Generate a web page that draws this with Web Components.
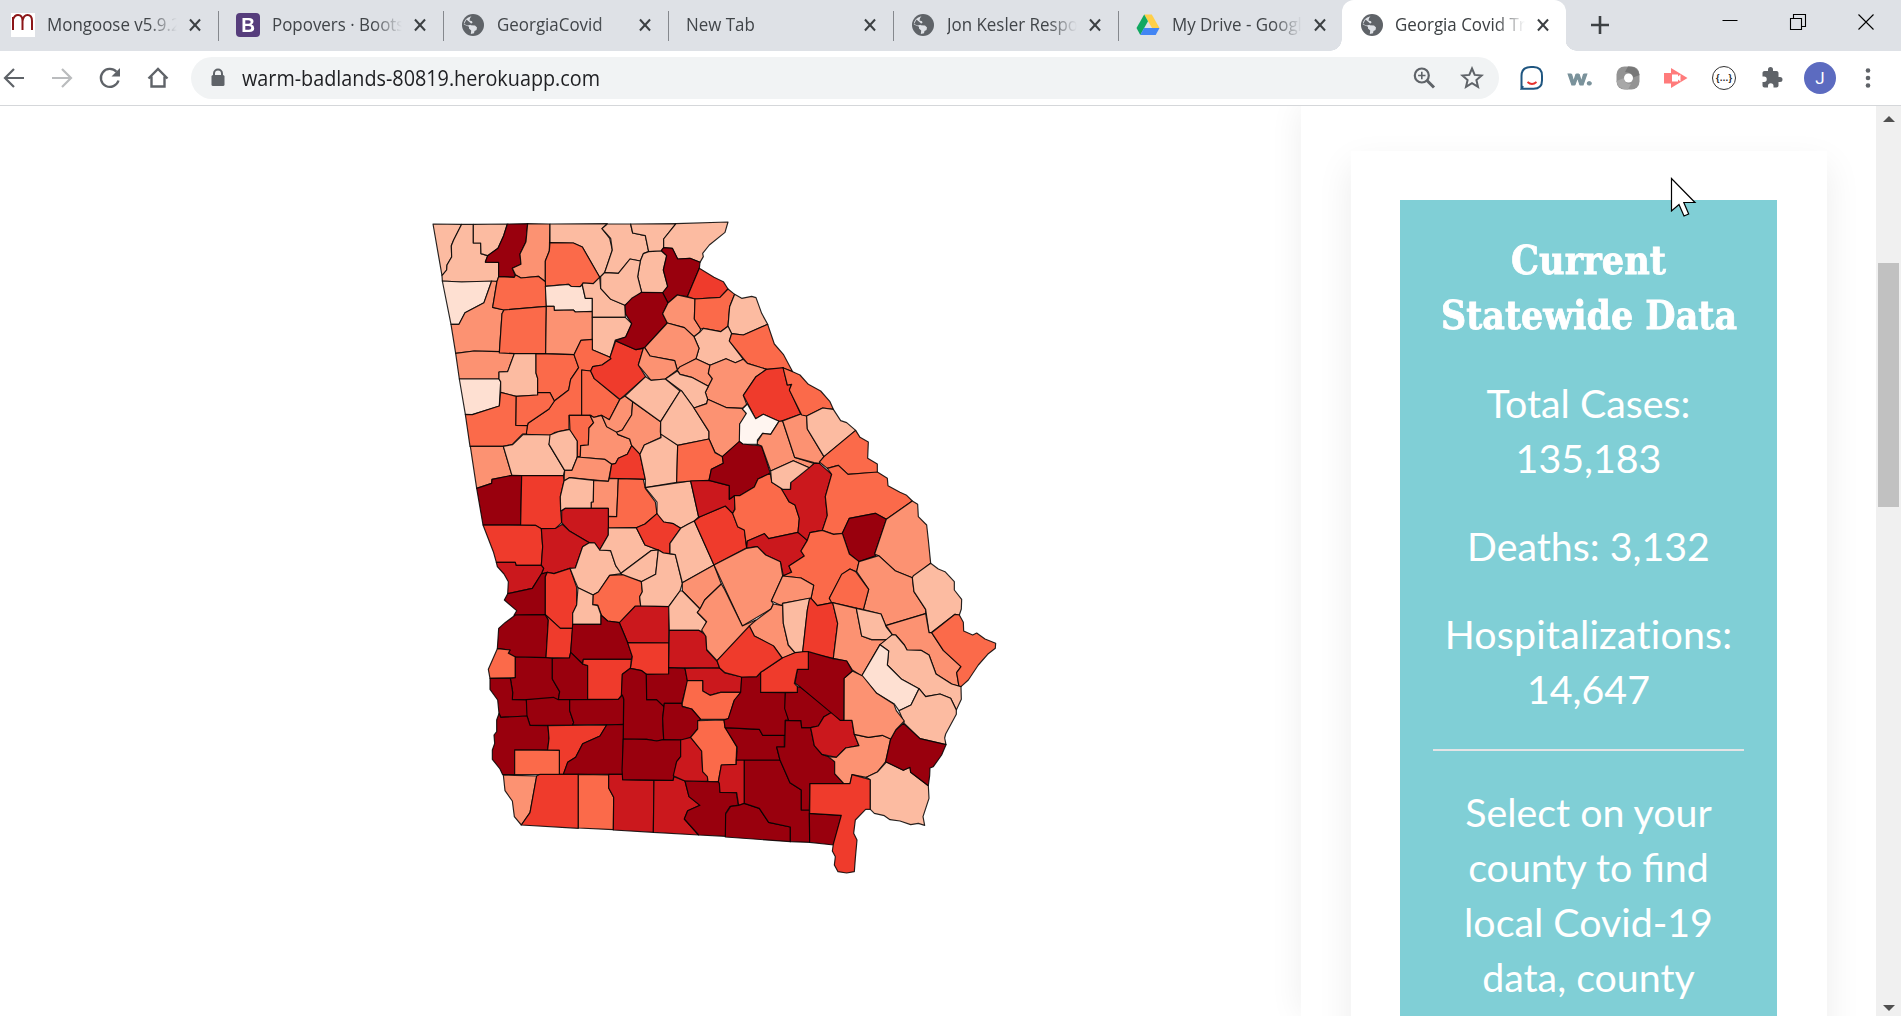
<!DOCTYPE html>
<html lang="en">
<head>
<meta charset="utf-8">
<title>Georgia Covid Tracker</title>
<style>
html,body{margin:0;height:100%;overflow:hidden;background:#fff}
</style>
</head>
<body>
<browser-window></browser-window>
<script>
const define=(name,html,after)=>customElements.define(name,class extends HTMLElement{
  connectedCallback(){
    if(this.shadowRoot)return;
    const t=document.createElement('template');
    t.innerHTML=typeof html==='function'?html(this):html;
    this.attachShadow({mode:'open'}).append(t.content.cloneNode(true));
    if(after)after(this);
  }
});

/* Text squeezed horizontally to a given width */
define('fit-text',`<style>:host{display:block}span{display:inline-block;white-space:pre;transform-origin:0 50%}</style><span><slot></slot></span>`,el=>{
  const s=el.shadowRoot.querySelector('span'),w=+el.getAttribute('w'),k=+el.getAttribute('k');
  const r=k||w/s.getBoundingClientRect().width;
  s.style.transform=`scaleX(${r})`;
  if(w)el.style.width=w+'px';
});

const ICONS={
  mongoose:`<rect x="0" y="0" width="24" height="24" fill="#fff"/><path d="M2 17V4M2 6.500Q3.500 2 7 2Q11.500 2 11.500 8V17M11.500 8Q12.500 2 16.500 2Q21 2 21 8V17" fill="none" stroke="#8c1618" stroke-width="2"/>`,
  boot:`<rect width="24" height="24" rx="4" fill="#563d7c"/><path fill="#fff" fill-rule="evenodd" d="M6.500 5H13Q17.500 5 17.500 8.600Q17.500 10.800 15.500 11.600Q18.200 12.400 18.200 15.200Q18.200 19 13.300 19H6.500ZM9.300 7.200V10.700H12.500Q14.700 10.700 14.700 8.900Q14.700 7.200 12.500 7.200ZM9.300 12.900V16.800H12.800Q15.300 16.800 15.300 14.800Q15.300 12.900 12.800 12.900Z"/>`,
  globe:`<circle cx="12" cy="12" r="11" fill="#5f6368"/><path fill="#dee1e6" d="M10.500 3.200Q8 5.500 8.500 7.500L11 8.200L11.500 9.800L9.500 11L9.800 12.300L14 12.500L16 14.500L15.500 17L13.500 18L13 20.300L9.800 21L10.200 17.500L8 15.500L8 13.800L2.800 11.500Q3 5 10.500 3.200Z"/><path fill="#5f6368" d="M5.500 6.500L9 9.500L11 11.500L6.500 12.500L3 11Z"/>`,
  drive:`<path fill="#ffcf48" d="M8.200 1.500H15.800L23.500 15H16Z"/><path fill="#11a861" d="M8.200 1.500L12 8.200L4.300 22L.5 15Z"/><path fill="#4285f4" d="M8 15H23.500L19.700 22H4.300Z"/>`,
  close:`<path d="M6.500 6L17.500 18M17.500 6L6.500 18" stroke="#3c4043" stroke-width="2.200"/>`,
  plus:`<path d="M12 3V21M3 12H21" stroke="#3c4043" stroke-width="2.600"/>`,
  back:`<path d="M22 12H3.500M12 3L3 12L12 21" fill="none" stroke="#5f6368" stroke-width="2.200"/>`,
  fwd:`<path d="M2 12H20.500M12 3L21 12L12 21" fill="none" stroke="#babcbe" stroke-width="2.200"/>`,
  reload:`<path d="M20.500 14.500A9 9 0 1 1 18.500 5.800" fill="none" stroke="#5f6368" stroke-width="2.300"/><path d="M22 2V10.500H13.500Z" fill="#5f6368"/>`,
  home:`<path d="M2.500 12.500L12 3L21.500 12.500M5.500 10.500V20.500H18.500V10.500" fill="none" stroke="#5f6368" stroke-width="2.400"/>`,
  lock:`<rect x="5.500" y="9" width="13" height="11" rx="1.500" fill="#5f6368"/><path d="M8 9.500V7.500A4 4 0 0 1 16 7.500V9.500" fill="none" stroke="#5f6368" stroke-width="2"/>`,
  zoom:`<circle cx="9.800" cy="9.500" r="7" fill="none" stroke="#5f6368" stroke-width="2.200"/><path d="M15 14.500L22 21.500" stroke="#5f6368" stroke-width="3"/><path d="M9.800 5.800V13.200M6.100 9.500H13.500" stroke="#5f6368" stroke-width="1.600"/>`,
  star:`<path d="M12 2.500L14.700 8.900L21.600 9.500L16.400 14L18 20.800L12 17.200L6 20.800L7.600 14L2.400 9.500L9.300 8.900Z" fill="none" stroke="#5f6368" stroke-width="2"/>`,
  smile:`<path d="M1.500 22.800V10Q1.500 1 11 1H13.500Q22 1 22 10V14.500Q22 22.800 13.500 22.800H1.500L3 20" fill="#fff" stroke="#1f5680" stroke-width="2"/><path d="M7.500 16Q12 20 16.500 16" fill="none" stroke="#e5322d" stroke-width="1.800"/>`,
  json:`<rect x=".5" y=".5" width="23" height="23" rx="8" fill="#939393"/><path d="M12 .5Q22 0 23.500 9L16 12Q16 6 9 6Z" fill="#777"/><path d="M12 23.500Q2 24 .5 15L8 12Q8 18 15 18Z" fill="#a8a8a8"/><circle cx="12.500" cy="12" r="4.500" fill="#fff"/>`,
  play:`<path fill="#ff7b7b" d="M0 7H7V2L23.500 12L7 22V17.500H0Z"/><path d="M8 8.500H14V10.500L16.500 8.500V15.500L14 13.500V15.500H8Z" fill="#fff"/>`,
  ext:`<path fill="#5f6368" d="M20 11H18.500V7C18.500 5.900 17.600 5 16.500 5H13V3.500A2.500 2.500 0 0 0 8 3.500V5H4.500C3.400 5 2.500 5.900 2.500 7V10.500H4A2.700 2.700 0 0 1 4 16H2.500V19.500C2.500 20.600 3.400 21.500 4.500 21.500H8V20A2.700 2.700 0 0 1 13.500 20V21.500H16.500C17.600 21.500 18.500 20.600 18.500 19.500V16H20A2.500 2.500 0 0 0 20 11Z"/>`,
  dots:`<circle cx="12" cy="4.500" r="2.300" fill="#5f6368"/><circle cx="12" cy="12" r="2.300" fill="#5f6368"/><circle cx="12" cy="19.500" r="2.300" fill="#5f6368"/>`,
  min:`<path d="M4.500 7.500H19.500" stroke="#000" stroke-width="1"/>`,
  max:`<path d="M4.500 5.500H15.500V16.500H4.500ZM7.500 5.500V1.500H19.500V13.500H15.500" fill="none" stroke="#000" stroke-width="1.100"/>`,
  quit:`<path d="M4.500 1.500L19.500 16.500M19.500 1.500L4.500 16.500" stroke="#000" stroke-width="1.100"/>`
};
define('ui-icon',el=>`<style>:host{display:block;width:24px;height:24px;flex:none}svg{display:block;width:100%;height:100%}</style><svg viewBox="0 0 24 24">${ICONS[el.getAttribute('name')]}</svg>`);

define('browser-tab',el=>`<style>
:host{display:flex;align-items:center;width:225px;height:51px;box-sizing:border-box;padding:0 12px 0 17px;flex:none;border-right:1.500px solid transparent;position:relative;font:18px/26px "Open Sans",sans-serif;color:#414549}
:host(:not([active]))::after{content:"";position:absolute;right:-1px;top:11px;height:30px;width:1.500px;background:#85888d}
:host([last])::after{display:none}
:host([active]){background:#fff;border-radius:12px 12px 0 0;margin-left:-2px;padding-left:18px;width:224px;padding-right:11px;color:#3c4043}
:host([active])::before{content:"";position:absolute;left:-12px;right:-12px;bottom:0;height:12px;background:radial-gradient(circle at 0 0,transparent 11.500px,#fff 12px) left/12px 12px no-repeat,radial-gradient(circle at 100% 0,transparent 11.500px,#fff 12px) right/12px 12px no-repeat}
div{flex:1;overflow:hidden;margin:-3px 5px 0 12px;-webkit-mask:linear-gradient(90deg,#000 101px,transparent 130px);mask:linear-gradient(90deg,#000 101px,transparent 130px)}
:host([active]) div{margin-left:11px}
:host([blank]) div{margin-left:0;-webkit-mask:none;mask:none}
ui-icon{margin-top:-1px}
.x{width:22px;height:22px}
</style>${el.hasAttribute('blank')?'':`<ui-icon name="${el.getAttribute('icon')}"></ui-icon>`}<div><fit-text k=".94"><slot></slot></fit-text></div><ui-icon class="x" name="close"></ui-icon>`);

define('tab-strip',`<style>
:host{display:flex;height:51px;background:#dee1e6;align-items:center}
.tabs{display:flex;margin-left:-6px;flex:none}
.plus{margin-left:22px;margin-top:-1px}
.win{margin-left:auto;display:flex;gap:44px;margin-right:23px;height:24px;padding-top:2px;align-self:flex-start;margin-top:11px}
</style><div class="tabs">
<browser-tab icon="mongoose">Mongoose v5.9.27</browser-tab>
<browser-tab icon="boot">Popovers · Bootstrap</browser-tab>
<browser-tab icon="globe">GeorgiaCovid</browser-tab>
<browser-tab blank>New Tab</browser-tab>
<browser-tab icon="globe">Jon Kesler Respo</browser-tab>
<browser-tab icon="drive" last>My Drive - Google</browser-tab>
<browser-tab icon="globe" active>Georgia Covid Tr</browser-tab></div>
<ui-icon class="plus" name="plus"></ui-icon>
<div class="win"><ui-icon name="min"></ui-icon><ui-icon name="max"></ui-icon><ui-icon name="quit"></ui-icon></div>`);

define('tool-bar',`<style>
:host{display:flex;align-items:center;height:54px;background:#fff;border-bottom:1px solid #d5d7da;padding-left:2px;font-family:"Open Sans",sans-serif}
.nav{display:flex;gap:24px;width:189px;flex:none}
.omni{display:flex;align-items:center;width:1308px;height:42px;border-radius:21px;background:#f1f3f4;box-sizing:border-box;padding:0 15px;font-size:21px;line-height:30px;color:#202124;flex:none}
.omni fit-text{margin:0 auto 0 12px}
.star{margin-left:24px}
.exts{display:flex;gap:24px;margin-left:21px;align-items:center}
.w{width:24px;font:900 20px/22px Lato,sans-serif;color:#7a929b;-webkit-text-stroke:1px #7a929b;margin-top:-3px}
.j{width:32px;height:32px;border-radius:50%;background:#5c6bc0;color:#fff;font:17px/32px Roboto,sans-serif;text-align:center;margin:0 -4px}
</style><div class="nav"><ui-icon name="back"></ui-icon><ui-icon name="fwd"></ui-icon><ui-icon name="reload"></ui-icon><ui-icon name="home"></ui-icon></div>
<div class="omni"><ui-icon name="lock"></ui-icon><fit-text w="358">warm-badlands-80819.herokuapp.com</fit-text><ui-icon name="zoom"></ui-icon><ui-icon class="star" name="star"></ui-icon></div>
<div class="exts"><ui-icon name="smile"></ui-icon><div class="w"><fit-text w="24">w.</fit-text></div><ui-icon name="json"></ui-icon><ui-icon name="play"></ui-icon><brace-icon></brace-icon><ui-icon name="ext"></ui-icon><div class="j">J</div><ui-icon name="dots"></ui-icon></div>`);

define('brace-icon',`<style>:host{display:flex;align-items:center;justify-content:center;width:24px;height:24px;box-sizing:border-box;border:1.800px solid #333;border-radius:50%;font:700 9px/12px "Liberation Sans",sans-serif;color:#222;flex:none}</style><span>{…}</span>`);

/* County shapes, in sheets of triple-size units: [dx, dy, "shade x,y x,y ..."] */
const FILL={a:'#fff5f0',b:'#fee0d2',c:'#fcbba1',d:'#fc9272',e:'#fb6a4a',f:'#ef3b2c',g:'#cb181d',h:'#99000d'};
const SHEETS=[
[0,0,`c 24,27 110,28 86,75 79,92 80,126 66,150 65,165 51,182
c 110,28 145,28 145,84 167,84 168,116 188,122 181,140 221,142 221,185 216,199 110,201 52,198 51,182 65,165 66,150 80,126 79,92 86,75
c 145,28 247,27 236,62 219,100 188,122 168,116 167,84 145,84
h 247,27 308,26 303,80 285,117 288,148 262,160 270,180 268,187 221,185 221,142 181,142 188,122 219,100 236,62
d 308,26 375,27 373,108 361,138 361,200 340,184 288,189 272,180 262,160 288,148 285,117 303,80
c 375,27 547,26 531,41 554,70 562,105 539,172 524,187 472,96 445,84 375,83
e 375,83 445,84 472,96 524,187 505,206 474,204 466,215 438,214 430,208 361,214 361,138 373,108
b 52,198 110,201 200,198 177,263 120,293 102,328 78,328
d 200,198 216,199 203,277 237,285 231,296 223,410 147,408 92,415 78,328 102,328 120,293 177,263
e 216,199 221,185 268,187 272,180 288,189 340,184 361,200 364,274 237,285 203,277
e 237,285 364,274 362,416 268,416 223,414 231,296
b 361,214 430,208 438,214 466,215 472,210 481,250 502,250 502,289 451,291 445,285 388,286 387,274 364,274
d 364,274 387,274 388,286 445,285 451,291 502,289 502,373 468,376 447,419 362,416
c 474,204 505,206 524,187 527,220 557,252 600,271 601,307 502,307 502,250 481,250 472,210
c 502,307 601,307 620,326 602,366 571,375 555,427 502,404
d 92,415 147,408 223,410 223,414 268,416 248,470 222,471 222,492 103,492
b 103,492 222,492 227,500 225,532 223,573 142,599 121,598
c 268,416 333,416 333,474 338,490 338,540 273,544 227,532 227,500 222,492 222,471 248,470
e 333,416 447,419 461,458 437,493 431,525 388,558 375,533 338,533 338,490 333,474
e 447,419 468,376 502,373 502,404 555,427 558,431 531,450 503,455 497,468 470,465 470,601 432,601 432,643 388,653 376,661 305,658 304,650 309,625 372,582 388,558 431,525 437,493 461,458
e 273,544 338,540 338,533 375,533 388,558 372,582 309,625 307,632 272,631
e 121,598 142,599 223,573 227,532 273,544 272,631 307,632 304,657 293,657 262,688 234,694 135,694
e 470,465 497,468 508,491 584,554 553,614 527,601 507,608 497,601 470,601
f 555,427 572,378 633,404 655,400 640,450 662,485 585,553 508,491 497,468 503,455 531,450 558,431`],
[75,555,`d 61,139 160,139 186,226 126,238 125,250 80,265
c 160,139 188,134 220,103 300,105 305,105 297,133 344,211 340,227 186,227
c 300,105 325,95 360,88 382,123 382,171 366,211 344,211 297,133
e 358,46 420,46 431,68 417,84 415,135 392,137 391,169 382,171 382,123 360,90
d 420,46 431,52 455,46 470,79 500,92 503,103 539,117 545,137 532,163 505,175 497,190 485,193 464,178 382,171 391,169 392,137 415,135 417,84 431,68
d 455,46 478,59 510,-2 525,-12 548,5 545,45 517,90 500,97 470,80
d 548,5 632,65 631,95 633,112 583,135 570,163 545,137 539,117 503,103 500,97 517,90 545,45
d 382,171 464,178 485,193 475,244 358,233 342,243 344,211 366,211
f 485,193 497,190 505,175 532,163 545,137 570,163 586,238 478,235
h 80,265 125,250 126,238 186,226 215,227 212,375 99,375
f 215,227 340,227 342,243 331,290 332,333 335,368 317,385 274,386 256,376 212,375
c 342,243 358,233 431,241 430,306 424,307 424,325 346,325 332,333 331,290
d 431,241 475,244 478,235 505,236 500,350 475,349 475,325 424,325 424,307 430,306
e 505,236 580,238 586,265 616,306 621,341 585,372 559,383 475,384 475,349 500,350
g 335,333 346,325 475,325 475,405 449,450 434,429 418,428 357,392 335,368
c 570,163 583,135 633,113 633,100 683,135 680,247 586,263 586,238
c 586,263 722,243 746,351 733,363 715,372 692,385 670,371 641,366 621,345 621,306
f 99,375 256,376 274,386 278,440 274,496 198,496 196,487 139,487 130,455
g 274,386 317,385 337,373 357,392 418,428 398,440 376,504 360,505 312,521 292,517 274,522 281,505 274,496 278,440
g 139,487 196,487 198,496 274,496 281,505 274,522 247,565 173,581 175,545 162,522 142,500
h 173,581 247,565 274,522 292,517 286,530 286,644 192,646 200,632 163,600
f 292,517 312,521 360,505 380,562 380,615 368,640 368,685 331,685 286,644 286,530
c 360,505 376,504 398,440 418,428 434,429 449,450 482,452 497,497 518,520 479,526 445,576 429,585 384,563 375,543
c 475,384 559,383 585,435 625,450 603,452 513,520 497,497 482,452 449,450 475,405
f 559,383 585,372 621,341 641,366 670,371 692,385 660,430 660,461 640,459 625,450 585,435
c 603,452 625,450 617,523 574,545 518,528 513,520
e 479,526 518,524 574,545 577,575 569,590 572,618 555,620 510,668 473,663 455,647 443,615 428,614 429,585 445,576
c 384,563 429,585 428,614 443,617 453,645 453,673 368,673 368,640 380,615
c 617,523 625,450 640,459 676,464 697,550 690,573 656,620 572,618 569,590 577,575 574,545
c 660,461 660,430 692,385 715,372 733,363 792,495 697,548 676,464
d 697,548 697,573 750,627 764,600 814,552 792,495`],
[165,1155,`g 466,18 568,20 566,129 443,128 418,68
c 566,20 600,-27 607,-27 660,27 652,38 680,66 665,95 656,91 568,91
h 106,45 196,44 205,60 198,173 106,171 85,160 90,150 52,146 56,85 75,68
f 196,44 241,85 278,85 272,157 268,174 198,173 205,60
h 278,73 363,73 363,45 383,63 418,68 443,128 457,170 454,178 310,178 308,192 272,157
f 443,128 566,129 566,222 499,223 485,212 451,205 457,170
g 568,91 656,91 678,105 680,150 711,183 719,204 566,203
e 52,146 90,150 85,160 106,171 106,233 30,235 25,208
h 106,171 198,173 217,175 217,237 239,275 235,299 97,299 98,277 91,235 106,233
h 217,175 268,174 272,157 308,192 323,197 323,298 235,299 239,275 217,237
f 310,178 454,178 451,205 427,223 425,285 415,298 323,298 323,197 308,192
h 427,223 451,205 485,212 499,223 500,299 530,299 552,320 548,355 551,419 530,423 500,418 430,417 431,295 424,285
h 499,223 566,222 566,203 615,205 623,245 605,310 553,310 552,320 530,299 500,299
g 615,205 719,204 735,219 785,231 783,277 722,277 690,286 668,273 668,242 622,242
e 622,242 668,242 668,273 690,286 722,277 783,277 762,303 745,358 662,358 635,327 605,318
h 553,310 605,310 607,320 635,327 662,358 653,365 653,387 632,412 618,420 551,419 548,355
h 30,235 91,235 98,277 97,299 139,300 143,348 62,352 57,340 53,300 30,268
h 139,299 220,292 235,299 269,299 269,332 281,367 278,375 150,376 141,348
h 269,299 415,298 427,285 431,298 430,373 278,375 281,367 269,332
h 57,340 62,352 141,348 150,376 204,377 207,415 203,450 104,450 104,524 68,524 60,507 37,478 37,450 44,430 42,405 50,395 50,360
f 204,377 380,375 360,408 308,431 287,472 263,487 250,523 238,523 238,451 203,450 207,415
h 380,375 430,373 428,523 250,523 263,487 287,472 308,431 360,408
e 104,450 238,451 238,523 104,524
d 70,525 104,526 170,528 150,638 124,675 103,650 97,603 75,572
f 170,528 180,523 295,523 295,685 124,675 150,638
e 295,523 386,525 386,564 401,592 400,689 295,684
g 386,523 428,523 428,539 522,541 520,697 400,690 401,592 386,564
g 522,541 579,541 582,530 615,543 627,590 660,616 623,632 613,657 656,705 520,697
h 430,417 500,418 530,423 551,419 602,420 602,470 590,485 579,541 428,539 426,510
g 602,420 632,412 665,453 668,515 684,530 682,544 615,543 580,527 590,485 602,470
e 632,412 653,387 653,362 732,360 735,380 770,440 768,493 724,495 715,545 684,544 682,530 668,515 665,453
h 615,543 718,546 720,576 769,578 775,615 750,620 737,640 737,709 656,705 613,657 623,632 660,616 627,590`],
[525,0,`c 22,27 92,27 98,54 136,62 146,110 130,116 121,138 90,132 55,175 14,173 37,105 32,70 6,41
c 92,27 228,26 191,72 191,98 184,108 146,110 136,62 98,54
c 228,26 384,21 375,52 328,90 308,115 310,125 300,142 270,130 233,132 217,100 191,98 191,72
c 130,116 146,110 184,108 200,122 190,165 203,214 188,235 125,232 113,185 121,138
c 14,173 55,175 90,132 121,138 113,185 125,232 75,271 32,253 2,220 2,185
h 191,98 217,100 233,132 270,130 300,142 298,160 262,245 232,240 204,264 188,233 203,214 190,165 200,122 184,106
f 298,160 342,187 370,200 384,222 360,247 285,252 262,245
h 75,271 95,250 125,232 188,233 204,264 188,296 202,324 134,398 108,404 47,377 77,366 95,326 77,298
d 204,264 232,240 285,252 283,312 302,342 299,352 282,365 253,338 202,324 188,296
e 285,252 360,247 384,222 404,238 389,275 384,334 362,350 310,340 302,342 283,312
c 404,238 425,250 455,244 468,248 485,295 503,328 430,360 395,356 384,334 389,275
c 282,365 299,352 310,340 362,350 384,334 395,356 388,378 430,433 406,443 378,431 330,451 288,431 297,400
e 395,356 430,360 503,328 523,387 550,418 578,470 550,460 500,463 442,445 388,378
d 134,398 202,324 253,338 282,365 297,400 288,431 240,457 232,465 224,437 150,423
d 130,400 134,398 150,423 224,437 232,465 196,492 153,496 115,450
d 240,455 288,431 330,451 325,475 337,491 325,514 275,487 240,478 232,465
d 330,451 378,431 406,443 430,433 442,445 500,463 468,485 430,541 440,568 427,580 380,578 323,553 316,532 337,491 325,475
c 196,492 232,468 240,478 275,487 325,514 316,532 323,553 320,566 282,579 245,528
c 137,485 153,496 196,492 240,528 182,620 75,543
c 240,528 245,528 282,579 327,650 327,672 233,691 182,657 182,620
d 323,553 380,578 427,580 440,597 419,628 419,680 367,725 345,712 327,672 327,650 282,579 320,566
f 550,458 562,510 574,508 569,525 602,597 540,620 490,598 467,611 430,541 468,485 500,463`],
[825,405,`a 142,162 167,206 190,193 237,214 212,253 188,250 172,270 175,283 128,282 118,274 119,222 139,190 127,177
e -67,286 27,267 45,308 67,320 70,340 34,358 27,391 -28,393 -70,397
f -17,513 0,500 76,468 98,490 113,530 133,540 140,593 42,645
g -28,393 28,391 88,407 88,448 104,437 104,478 98,490 76,468 0,500 -4,501
h 118,274 128,282 185,288 211,370 174,387 163,411 119,437 103,437 88,448 88,407 27,391 34,358 70,340 67,320
e 211,370 216,397 248,418 267,455 285,465 298,505 294,547 206,566 193,551 142,573 140,593 133,540 113,530 98,490 105,478 103,437 119,437 163,411 174,387
g 142,573 193,551 206,566 294,547 322,571 303,603 313,618 267,648 275,667 250,677 241,635 197,615 172,590 140,594
g 272,398 342,340 358,340 395,373 376,440 382,496 367,541 330,548 322,571 294,547 298,505 285,465 267,455 245,418 272,417
d 172,275 188,250 212,253 237,214 248,213 284,322 342,340 328,353 280,332 212,363 185,288 172,283
c 212,363 280,332 328,353 272,398 271,418 248,418 215,397
d 248,213 303,192 320,198 322,237 372,320 358,340 342,338 284,322
e 249,53 278,65 300,75 325,103 362,123 390,155 400,178 368,174 320,198 305,195 268,120 275,103 262,105
c 320,198 368,174 400,178 422,212 440,218 467,241 372,320 322,237
e 467,241 480,262 505,276 503,325 532,342 532,367 444,373 415,346 382,355 358,336 372,320
e 382,355 415,346 444,373 532,366 562,385 564,407 600,427 620,436 637,453 559,508 526,490 448,505 427,550 401,553 367,541 382,496 376,440 395,373
h 448,505 526,490 559,508 524,612 528,617 477,635 448,612 427,550
e 330,548 367,541 401,553 427,550 448,612 477,635 470,665 450,657 425,675 388,745 398,758 352,767 333,745 341,706 303,684 248,678 275,667 267,648 313,618 303,603 322,571
d 559,508 637,453 653,463 655,500 680,525 685,570 692,640 637,683 585,662 536,617 524,612`],
[825,975,`d 42,75 140,25 172,20 197,45 241,65 248,108 214,183 220,192 213,207 127,258
d 248,108 303,114 341,136 333,175 248,190 245,197 214,183
d 64,132 72,145 127,258 167,240 163,250 148,262 51,362 20,328 18,290 5,270 20,245 0,225 -8,217 0,207 14,180
d 148,258 165,243 213,207 220,192 248,197 250,250 265,315 285,338 248,355 222,320 163,288
c 248,190 331,174 322,210 308,338 285,338 265,315 250,250
f 328,178 333,175 352,197 398,188 413,250 400,355 308,335 322,210
d 477,65 536,47 585,92 637,113 642,155 677,208 677,221 557,257 543,222 490,209 506,148 470,95
e 388,175 425,103 450,87 467,95 506,148 490,209 395,188
c 637,113 640,107 692,70 715,87 735,95 763,125 763,150 785,178 784,207 778,225 765,223 695,277 687,278 677,208 642,155
d 398,188 469,205 485,288 515,299 565,299 540,314 485,408 457,390 440,363 400,355 413,250
c 469,205 543,222 560,263 577,284 562,299 515,299 485,288
d 557,257 677,221 687,278 695,278 730,331 783,380 770,398 777,440 755,432 708,402 687,345 663,331 621,330 613,315 587,285 577,284 562,262
e 695,278 765,223 778,225 790,247 791,273 818,285 830,279 855,297 887,310 886,325 863,343 835,375 805,420 783,440 777,440 770,398 783,380 730,331
c 540,314 577,284 587,285 613,315 621,330 663,331 687,345 708,402 755,432 783,440 784,478 769,510 752,475 720,462 677,470 657,446 605,418 562,375 566,333
b 540,314 566,333 562,375 605,418 657,446 633,495 597,512 583,492 530,460 485,408
c 657,446 677,470 720,462 752,475 769,510 769,523 737,582 734,594 738,614 660,596 613,550 597,512 633,495`],
[825,1275,`g 64,375 109,373 109,360 133,360 133,491 116,496 110,458 60,457 58,430 55,425
h 92,499 116,496 133,490 178,505 206,547 271,561 271,605 76,591 77,522
h 133,360 240,360 270,428 304,450 304,510 328,510 329,607 271,605 271,561 206,547 178,505 133,490
h 75,263 178,268 188,286 253,286 253,321 230,321 240,360 109,360 112,322
h 125,111 170,110 182,97 182,157 256,158 256,206 266,241 256,241 256,286 188,286 178,268 75,263 72,240 85,235 103,180 122,157
h 256,241 303,242 305,263 332,263 343,317 366,343 385,350 404,365 404,401 431,430 330,431 328,510 304,510 304,450 270,428 240,360 230,321 254,321
h 256,158 292,157 292,140 302,142 397,216 372,230 355,258 332,263 305,263 303,242 266,241 254,206
g 397,216 421,241 456,241 463,283 477,317 437,324 409,352 366,343 343,317 332,263 355,258 372,230
d 463,283 505,292 547,286 572,297 557,365 532,396 499,412 456,404 450,431 431,430 404,401 404,365 385,350 409,352 437,324 477,317
h 328,520 424,526 401,615 329,607
f 330,431 450,431 456,404 511,419 511,508 497,508 466,540 461,580 471,600 466,655 463,695 440,699 414,695 403,675 406,650 397,633 400,612 424,526 329,520
c 499,412 532,396 559,366 610,391 630,382 632,397 685,437 687,475 669,530 674,556 655,550 632,554 600,543 570,539 553,527 523,520 511,508 511,419
h 610,250 660,296 738,314 725,345 700,380 690,384 689,407 685,437 632,397 630,382 610,391 557,365 572,297 587,270
d 457,93 488,108 530,160 582,193 589,212 613,243 587,270 572,297 547,286 505,292 463,283 456,241 432,241 432,115
h 325,35 398,56 440,63 457,93 432,115 431,241 421,241 302,142 285,130 292,88 325,88
f 182,97 248,53 285,38 310,35 325,35 325,88 292,88 283,130 292,140 292,157 182,157
f 51,62 148,-42 163,-12 220,17 246,54 182,97 170,110 125,111 75,98 59,84`]];
define('georgia-map',`<style>:host{display:block;width:600px;height:680px}svg{display:block}polygon{stroke:#000;stroke-opacity:.85;stroke-width:3.500;stroke-linejoin:round}</style><svg width="600" height="680" viewBox="0 0 1800 2040">${
SHEETS.map(([x,y,s])=>`<g transform="translate(${x} ${y})">${s.split('\n').map(l=>`<polygon fill="${FILL[l[0]]}" points="${l.slice(2)}"/>`).join('')}</g>`).join('')}</svg>`);

define('stat-card',`<style>
:host{display:block;background:#fff;padding:49px 50px 0 49px;box-shadow:0 14px 34px rgba(0,0,0,.08);width:476px;height:920px;box-sizing:border-box}
.in{background:#80cfd6;height:871px;padding:32px 33px 0;box-sizing:border-box;color:#fff;text-align:center;font:39.350px/55px Lato,sans-serif}
h2{margin:0;font:bold 40px/55px "DejaVu Serif",serif;-webkit-text-stroke:.8px #fff;display:flex;flex-direction:column;align-items:center}
h2 fit-text{height:55px}
p{margin:33px -20px 0;white-space:nowrap}
i{font-style:normal;font-variant-ligatures:none;letter-spacing:.2px}
hr{border:0;height:2px;background:#e4e4e6;margin:33px 0 0}
</style><div class="in"><h2><fit-text w="155">Current</fit-text><fit-text w="296">Statewide Data</fit-text></h2>
<p>Total Cases:<br>135,183</p><p>Deaths: 3,132</p><p><i>Hospitalizations:</i><br>14,647</p><hr>
<p>Select on your<br>county to find<br>local Covid-19<br>data, county</p></div>`);

define('scroll-bar',`<style>:host{display:flex;flex-direction:column;align-items:center;width:25px;background:#f0f0f0;flex:none}
svg{display:block;flex:none}.up{margin-top:10px}.thumb{width:21px;height:244px;background:#c1c1c1;margin-top:141px}.down{margin-top:auto;margin-bottom:5px}</style>
<svg class="up" width="12" height="6"><path d="M6 0L12 6H0Z" fill="#505050"/></svg><div class="thumb"></div><svg class="down" width="12" height="6"><path d="M6 6L0 0H12Z" fill="#505050"/></svg>`);

define('mouse-cursor',`<style>:host{display:block;position:absolute;left:1670px;top:176px}svg{display:block}</style><svg width="28" height="44" viewBox="0 0 28 44"><path d="M1.500 2.500V35L9 28.500L14 40L18.700 38L13.800 26.500H25Z" fill="#fff" stroke="#000" stroke-width="1.200"/></svg>`);

define('page-view',`<style>
:host{display:flex;flex:1;min-height:0;overflow:hidden;background:#fff}
main{flex:none;width:1301px;box-sizing:border-box;padding:109px 0 0 425px}
aside{flex:none;width:575px;box-sizing:border-box;padding:45px 0 0 50px;background:#fff;box-shadow:0 0 32px rgba(0,0,0,.07);overflow:hidden}
</style><main><georgia-map></georgia-map></main><aside><stat-card></stat-card></aside><scroll-bar></scroll-bar>`);

define('browser-window',`<style>:host{display:flex;flex-direction:column;width:1901px;height:1016px;overflow:hidden;position:relative}</style>
<tab-strip></tab-strip><tool-bar></tool-bar><page-view></page-view><mouse-cursor></mouse-cursor>`);
</script>
</body>
</html>
